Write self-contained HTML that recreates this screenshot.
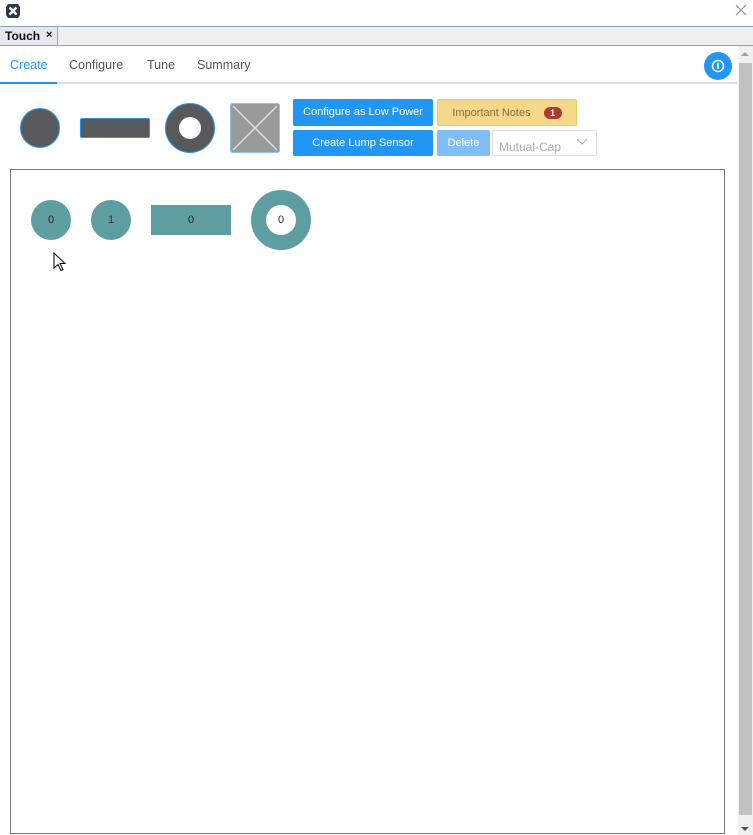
<!DOCTYPE html>
<html><head><meta charset="utf-8"><style>
*{box-sizing:border-box;margin:0;padding:0}
body{width:753px;height:835px;overflow:hidden;background:#fff;font-family:"Liberation Sans",sans-serif;position:relative}
.a{position:absolute}
.btn{position:absolute;color:#fff;font-size:11px;text-align:center;border-radius:2px}
</style></head><body>
<svg class="a" style="left:5px;top:3px" width="16" height="16" viewBox="0 0 16 16"><path d="M3 1h10l2 3v8l-2 3H3L1 12V4z" fill="#2a3a4a"/><path d="M4.5 4.5l7 7M11.5 4.5l-7 7" stroke="#fff" stroke-width="2.4"/></svg>
<svg class="a" style="left:735px;top:4px" width="12" height="12"><path d="M1 1l10 10M11 1L1 11" stroke="#888" stroke-width="1"/></svg>
<div class="a" style="left:0;top:26px;width:753px;height:1px;background:#8fa3b8"></div>
<div class="a" style="left:0;top:27px;width:753px;height:18px;background:#efefef"></div>
<div class="a" style="left:0;top:27px;width:58px;height:18px;background:#e4e8f0;border-right:1px solid #9ab"></div>
<div class="a" style="left:5px;top:29px;font-size:12px;font-weight:bold;color:#111">Touch</div>
<div class="a" style="left:46px;top:29px;font-size:11px;font-weight:bold;color:#111">×</div>
<div class="a" style="left:0;top:45px;width:753px;height:1px;background:#8fa3b8"></div>
<div class="a" style="left:10px;top:58px;font-size:12.5px;color:#2196f3">Create</div>
<div class="a" style="left:69px;top:58px;font-size:12.5px;color:#555">Configure</div>
<div class="a" style="left:147px;top:58px;font-size:12.5px;color:#555">Tune</div>
<div class="a" style="left:197px;top:58px;font-size:12.5px;color:#555">Summary</div>
<div class="a" style="left:0;top:82px;width:737px;height:2px;background:#dde0e3"></div>
<div class="a" style="left:0;top:82px;width:57px;height:2px;background:#2196f3"></div>
<div class="a" style="left:704px;top:52px;width:28px;height:28px;border-radius:50%;background:#2196f3"></div>
<svg class="a" style="left:710px;top:58px" width="16" height="16"><circle cx="8" cy="8" r="5.5" fill="none" stroke="#fff" stroke-width="1.5"/><path d="M8 5v6" stroke="#fff" stroke-width="1.6"/></svg>
<div class="a" style="left:738px;top:46px;width:15px;height:789px;background:#f0f0f0"></div>
<div class="a" style="left:739px;top:63px;width:13px;height:752px;background:#c1c1c1"></div>
<svg class="a" style="left:740px;top:51px" width="10" height="6"><path d="M1 5h8L5 1z" fill="#a0a0a0"/></svg>
<svg class="a" style="left:740px;top:826px" width="10" height="6"><path d="M1 1h8L5 5z" fill="#505050"/></svg>
<div class="a" style="left:20px;top:108px;width:40px;height:40px;border-radius:50%;background:#58595b;border:1px solid #2196f3"></div>
<div class="a" style="left:80px;top:118px;width:70px;height:20px;border-radius:2px;background:#58595b;border:1px solid #2196f3"></div>
<div class="a" style="left:165px;top:103px;width:50px;height:50px;border-radius:50%;background:#58595b;border:1px solid #2196f3"></div>
<div class="a" style="left:179px;top:117px;width:22px;height:22px;border-radius:50%;background:#fff"></div>
<svg class="a" style="left:230px;top:103px" width="50" height="50"><rect x="0.5" y="0.5" width="49" height="49" rx="2" fill="#999" stroke="#8cc4f0"/><path d="M3 3l44 44M47 3L3 47" stroke="#ddd" stroke-width="1.5"/></svg>
<div class="btn" style="left:293px;top:99px;width:140px;height:27px;line-height:27px;background:#2196f3">Configure as Low Power</div>
<div class="btn" style="left:293px;top:130px;width:140px;height:26px;line-height:27px;background:#2196f3">Create Lump Sensor</div>
<div class="btn" style="left:437px;top:99px;width:140px;height:27px;line-height:26px;background:#f5d88a;border:1px solid #f0c860;color:#8a6a40">Important Notes <span style="display:inline-block;margin-left:10px;background:#b03a2e;color:#fff;border-radius:7px;width:18px;height:12px;line-height:12px;font-size:9px;font-weight:bold;vertical-align:0px">1</span></div>
<div class="btn" style="left:437px;top:130px;width:53px;height:26px;line-height:27px;background:#7fbff5">Delete</div>
<div class="a" style="left:492px;top:130px;width:105px;height:26px;border:1px solid #ddd;border-radius:2px;font-size:12px;color:#aaa;padding:9px 0 0 6px">Mutual-Cap</div>
<svg class="a" style="left:576px;top:138px" width="12" height="8"><path d="M1 1l5 5 5-5" fill="none" stroke="#aaa"/></svg>
<div class="a" style="left:10px;top:169px;width:715px;height:665px;border:1px solid #777"></div>
<div class="a" style="left:31px;top:200px;width:40px;height:40px;border-radius:50%;background:#5f9ea0;text-align:center;line-height:40px;font-size:11px;color:#222">0</div>
<div class="a" style="left:91px;top:200px;width:40px;height:40px;border-radius:50%;background:#5f9ea0;text-align:center;line-height:40px;font-size:11px;color:#333">1</div>
<div class="a" style="left:151px;top:205px;width:80px;height:30px;background:#5f9ea0;text-align:center;line-height:30px;font-size:11px;color:#222">0</div>
<div class="a" style="left:251px;top:190px;width:60px;height:60px;border-radius:50%;background:#5f9ea0"></div>
<div class="a" style="left:266px;top:205px;width:30px;height:30px;border-radius:50%;background:#fff;text-align:center;line-height:30px;font-size:11px;color:#333">0</div>
<svg class="a" style="left:53px;top:252px" width="14" height="20"><path d="M1 1v15l4-3.5 3 6 2-1-3-6h5z" fill="#fff" stroke="#000" stroke-width="1"/></svg>
</body></html>
